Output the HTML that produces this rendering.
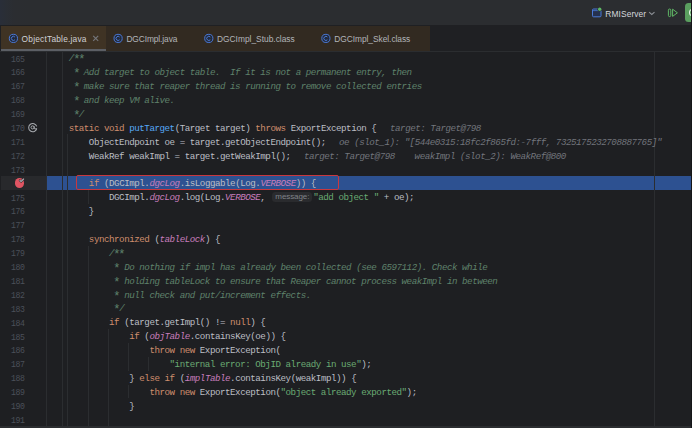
<!DOCTYPE html>
<html><head><meta charset="utf-8">
<style>
*{margin:0;padding:0;box-sizing:border-box}
html,body{width:692px;height:428px;overflow:hidden;background:#1e1f22}
body{position:relative;font-family:"Liberation Sans",sans-serif}
.abs{position:absolute}
#title{left:0;top:0;width:692px;height:25px;background:linear-gradient(90deg,#292e39 0px,#2a2e35 6px,#2b2d31 14px,#2b2d30 30px)}
#titleb{display:none}
#tabbar{left:0;top:25px;width:692px;height:26px;background:#1f2023}
#tabs{left:1px;top:26px;width:429px;height:25px;background:#322a21}
#tab1{left:1px;top:26px;width:105px;height:23px;background:#3f3324}
#uline{left:1px;top:49.2px;width:105px;height:2.4px;background:#5c5f65}
#tabsep{left:0;top:51px;width:692px;height:1px;background:#2b2d30}
#rcol{left:691px;top:0;width:1px;height:428px;background:#151618}
.tabtxt{font-size:8.4px;color:#cfd1d5;top:33.6px;line-height:11px;white-space:pre}
#editor{left:0;top:52px;width:692px;height:374px;background:#1e1f22;overflow:hidden}
.ln{position:absolute;left:0;width:24.5px;text-align:right;font-family:"Liberation Mono",monospace;font-size:8.2px;letter-spacing:-0.420px;color:#4b5059;white-space:pre;line-height:13.9px;height:13.9px}
.cl{position:absolute;left:48.5px;font-family:"Liberation Mono",monospace;font-size:9.2px;letter-spacing:-0.470px;color:#bcbec4;white-space:pre;line-height:13.9px;height:13.9px}
.k{color:#cf8e6d}
.m{color:#56a8f5}
.f{color:#c77dbb;font-style:italic}
.s{color:#6aab73}
.d{color:#5f826b;font-style:italic}
.st{display:inline-block;transform:translateY(1.4px) scale(1.3);font-style:normal}
.h{color:#72757c;font-style:italic}
.vg{position:absolute;width:1px;background:#2b2d30}
#bottom{left:0;top:426px;width:692px;height:2px;background:#2b2d30}
</style></head><body>
<div id="title" class="abs"></div>
<div id="titleb" class="abs"></div>
<svg class="abs" style="left:588px;top:4px" width="20" height="16" viewBox="0 0 20 16">
<rect x="4.5" y="5" width="8.5" height="7.8" rx="1" fill="#25314f" stroke="#4a7ad6" stroke-width="1"/>
<line x1="5" y1="6.6" x2="12.5" y2="6.6" stroke="#4a7ad6" stroke-width="0.8"/>
<circle cx="11.7" cy="5.3" r="2.3" fill="#2b2d30"/>
<circle cx="11.7" cy="5.3" r="1.7" fill="#5fb865"/>
</svg>
<div class="abs" style="left:605.3px;top:8.6px;font-size:8.4px;letter-spacing:0.1px;line-height:10px;color:#d5d7db;white-space:pre">RMIServer</div>
<svg class="abs" style="left:646px;top:9px" width="12" height="8" viewBox="0 0 12 8">
<polyline points="3.1,3.1 5.8,5.5 8.5,3.1" fill="none" stroke="#8c9096" stroke-width="1.1"/>
</svg>
<svg class="abs" style="left:664px;top:5px" width="18" height="16" viewBox="0 0 18 16">
<rect x="4.4" y="4" width="2.4" height="7.6" rx="1.2" fill="none" stroke="#5fb865" stroke-width="1"/>
<path d="M8.6 4.2 L13.4 7.8 L8.6 11.4 Z" fill="none" stroke="#5fb865" stroke-width="1" stroke-linejoin="round"/>
</svg>
<div class="abs" style="left:684.6px;top:3px;width:12px;height:19px;border-radius:3.5px;background:#5a9f5f"></div>
<div class="abs" style="left:689px;top:9px;width:6px;height:7px;border-radius:50%;border:1px solid #e8f3e9"></div>

<div id="tabbar" class="abs"></div>
<div id="tabs" class="abs"></div>
<div id="tab1" class="abs"></div>
<div id="uline" class="abs"></div>
<div id="tabsep" class="abs"></div>
<svg class="abs" style="left:7px;top:32px" width="12" height="12" viewBox="0 0 12 12"><circle cx="6.40" cy="6.40" r="4.1" fill="#222a3b" stroke="#4a78d6" stroke-width="1"/><path d="M7.90 5.00 A2.05 2.05 0 1 0 7.90 7.80" fill="none" stroke="#4a78d6" stroke-width="1"/></svg><svg class="abs" style="left:112px;top:32px" width="12" height="12" viewBox="0 0 12 12"><circle cx="6.10" cy="6.40" r="4.1" fill="#222a3b" stroke="#4a78d6" stroke-width="1"/><path d="M7.60 5.00 A2.05 2.05 0 1 0 7.60 7.80" fill="none" stroke="#4a78d6" stroke-width="1"/></svg><svg class="abs" style="left:202px;top:32px" width="12" height="12" viewBox="0 0 12 12"><circle cx="6.80" cy="6.40" r="4.1" fill="#222a3b" stroke="#4a78d6" stroke-width="1"/><path d="M8.30 5.00 A2.05 2.05 0 1 0 8.30 7.80" fill="none" stroke="#4a78d6" stroke-width="1"/></svg><svg class="abs" style="left:319px;top:32px" width="12" height="12" viewBox="0 0 12 12"><circle cx="6.90" cy="6.40" r="4.1" fill="#222a3b" stroke="#4a78d6" stroke-width="1"/><path d="M8.40 5.00 A2.05 2.05 0 1 0 8.40 7.80" fill="none" stroke="#4a78d6" stroke-width="1"/></svg>
<svg class="abs" style="left:91px;top:33px" width="10" height="10" viewBox="0 0 10 10">
<path d="M2.2 2.9 L7.2 7.9 M7.2 2.9 L2.2 7.9" stroke="#74767b" stroke-width="1.15"/>
</svg>
<div class="abs tabtxt" style="left:21.6px;letter-spacing:0.2px">ObjectTable.java</div>
<div class="abs tabtxt" style="left:126.4px;letter-spacing:-0.1px;color:#b3b5ba">DGCImpl.java</div>
<div class="abs tabtxt" style="left:217px;letter-spacing:0px;color:#b3b5ba">DGCImpl_Stub.class</div>
<div class="abs tabtxt" style="left:334.2px;letter-spacing:-0.04px;color:#b3b5ba">DGCImpl_Skel.class</div>

<div id="editor" class="abs">
<div class="abs" style="left:1px;top:124.00px;width:46px;height:14px;background:#28292c"></div>
<div class="abs" style="left:47px;top:124.00px;width:645px;height:14px;background:#2d5191"></div>
<div class="vg" style="left:46px;top:-1.10px;height:375.30px"></div>
<div class="vg" style="left:62px;top:-1.10px;height:375.30px"></div>
<div class="vg" style="left:67px;top:82.30px;height:291.90px"></div>
<div class="vg" style="left:87.5px;top:137.90px;height:13.90px"></div>
<div class="vg" style="left:87.5px;top:193.50px;height:180.70px"></div>
<div class="vg" style="left:107.7px;top:276.90px;height:97.30px"></div>
<div class="vg" style="left:127.8px;top:290.80px;height:27.80px"></div>
<div class="vg" style="left:147.8px;top:304.70px;height:13.90px"></div>
<div class="vg" style="left:127.8px;top:332.50px;height:13.90px"></div>
<div class="abs" style="left:654px;top:0;width:1px;height:374px;background:#2b2d30"></div>
<div class="abs" style="left:76px;top:123.00px;width:263px;height:15px;border:1px solid #c8383f;border-radius:2px"></div>
<div class="ln" style="top:0.50px">165</div>
<div class="cl" style="top:0.20px"><span class="d">    /<span class="st">*</span><span class="st">*</span></span></div>
<div class="ln" style="top:14.40px">166</div>
<div class="cl" style="top:14.10px"><span class="d">     <span class="st">*</span> Add target to object table.  If it is not a permanent entry, then</span></div>
<div class="ln" style="top:28.30px">167</div>
<div class="cl" style="top:28.00px"><span class="d">     <span class="st">*</span> make sure that reaper thread is running to remove collected entries</span></div>
<div class="ln" style="top:42.20px">168</div>
<div class="cl" style="top:41.90px"><span class="d">     <span class="st">*</span> and keep VM alive.</span></div>
<div class="ln" style="top:56.10px">169</div>
<div class="cl" style="top:55.80px"><span class="d">     <span class="st">*</span>/</span></div>
<div class="ln" style="top:70.00px">170</div>
<div class="cl" style="top:69.70px">    <span class="k">static void </span><span class="m">putTarget</span>(Target target) <span class="k">throws </span>ExportException {</div>
<div class="ln" style="top:83.90px">171</div>
<div class="cl" style="top:83.60px">        ObjectEndpoint oe = target.getObjectEndpoint();</div>
<div class="ln" style="top:97.80px">172</div>
<div class="cl" style="top:97.50px">        WeakRef weakImpl = target.getWeakImpl();</div>
<div class="ln" style="top:111.70px">173</div>
<div class="cl" style="top:111.40px"></div>
<div class="cl" style="top:125.30px">        <span class="k">if </span>(DGCImpl.<span class="f">dgcLog</span>.isLoggable(Log.<span class="f">VERBOSE</span>)) {</div>
<div class="ln" style="top:139.50px">175</div>
<div class="cl" style="top:139.20px">            DGCImpl.<span class="f">dgcLog</span>.log(Log.<span class="f">VERBOSE</span>, </div>
<div class="ln" style="top:153.40px">176</div>
<div class="cl" style="top:153.10px">        }</div>
<div class="ln" style="top:167.30px">177</div>
<div class="cl" style="top:167.00px"></div>
<div class="ln" style="top:181.20px">178</div>
<div class="cl" style="top:180.90px">        <span class="k">synchronized </span>(<span class="f">tableLock</span>) {</div>
<div class="ln" style="top:195.10px">179</div>
<div class="cl" style="top:194.80px"><span class="d">            /<span class="st">*</span><span class="st">*</span></span></div>
<div class="ln" style="top:209.00px">180</div>
<div class="cl" style="top:208.70px"><span class="d">             <span class="st">*</span> Do nothing if impl has already been collected (see 6597112). Check while</span></div>
<div class="ln" style="top:222.90px">181</div>
<div class="cl" style="top:222.60px"><span class="d">             <span class="st">*</span> holding tableLock to ensure that Reaper cannot process weakImpl in between</span></div>
<div class="ln" style="top:236.80px">182</div>
<div class="cl" style="top:236.50px"><span class="d">             <span class="st">*</span> null check and put/increment effects.</span></div>
<div class="ln" style="top:250.70px">183</div>
<div class="cl" style="top:250.40px"><span class="d">             <span class="st">*</span>/</span></div>
<div class="ln" style="top:264.60px">184</div>
<div class="cl" style="top:264.30px">            <span class="k">if </span>(target.getImpl() != <span class="k">null</span>) {</div>
<div class="ln" style="top:278.50px">185</div>
<div class="cl" style="top:278.20px">                <span class="k">if </span>(<span class="f">objTable</span>.containsKey(oe)) {</div>
<div class="ln" style="top:292.40px">186</div>
<div class="cl" style="top:292.10px">                    <span class="k">throw new </span>ExportException(</div>
<div class="ln" style="top:306.30px">187</div>
<div class="cl" style="top:306.00px">                        <span class="s">"internal error: ObjID already in use"</span>);</div>
<div class="ln" style="top:320.20px">188</div>
<div class="cl" style="top:319.90px">                } <span class="k">else if </span>(<span class="f">implTable</span>.containsKey(weakImpl)) {</div>
<div class="ln" style="top:334.10px">189</div>
<div class="cl" style="top:333.80px">                    <span class="k">throw new </span>ExportException(<span class="s">"object already exported"</span>);</div>
<div class="ln" style="top:348.00px">190</div>
<div class="cl" style="top:347.70px">                }</div>
<div class="ln" style="top:361.90px">191</div>
<div class="cl" style="top:361.60px"></div>
<div class="cl h" style="top:69.70px;left:390px">target: Target@798</div>
<div class="cl h" style="top:83.60px;left:339px">oe (slot_1): "[544e0315:18fc2f865fd:-7fff, 7325175232708887765]"</div>
<div class="cl h" style="top:97.50px;left:304px">target: Target@798</div>
<div class="cl h" style="top:97.50px;left:414.6px">weakImpl (slot_2): WeakRef@800</div>
<div class="abs" style="left:272px;top:139.50px;width:39.6px;height:10.7px;border-radius:3.5px;background:#2a2b2e;color:#80838a;font-size:8px;letter-spacing:-0.08px;line-height:10.7px;padding-left:3.3px">message:</div>
<div class="cl" style="top:139.20px;left:313.2px"><span class="s">"add object "</span> + oe);</div>
<div class="abs" style="left:14.8px;top:126.00px;width:9.5px;height:9.5px;border-radius:50%;background:#e05563"></div>
<svg class="abs" style="left:26px;top:68px" width="14" height="14" viewBox="0 0 14 14"><path d="M10.75 8.6 A4.1 4.1 0 1 1 10.7 6.4" fill="none" stroke="#a8abb0" stroke-width="1.05"/><circle cx="6.6" cy="7.4" r="1.55" fill="none" stroke="#a8abb0" stroke-width="1"/><path d="M8.15 6.2 L8.15 8.1 Q8.3 9.3 10.0 8.9 L10.75 8.6" fill="none" stroke="#a8abb0" stroke-width="1"/></svg>
<svg class="abs" style="left:14px;top:124.00px" width="14" height="14" viewBox="0 0 14 14"><polyline points="5.9,4.5 7.1,5.5 9.6,3.0" fill="none" stroke="#3a2628" stroke-width="2.2" stroke-linecap="round"/><polyline points="5.9,4.5 7.1,5.5 9.6,3.0" fill="none" stroke="#a9b0b8" stroke-width="1.1" stroke-linecap="round"/></svg>
</div>
<div id="bottom" class="abs"></div>
<div id="rcol" class="abs"></div>
</body></html>
